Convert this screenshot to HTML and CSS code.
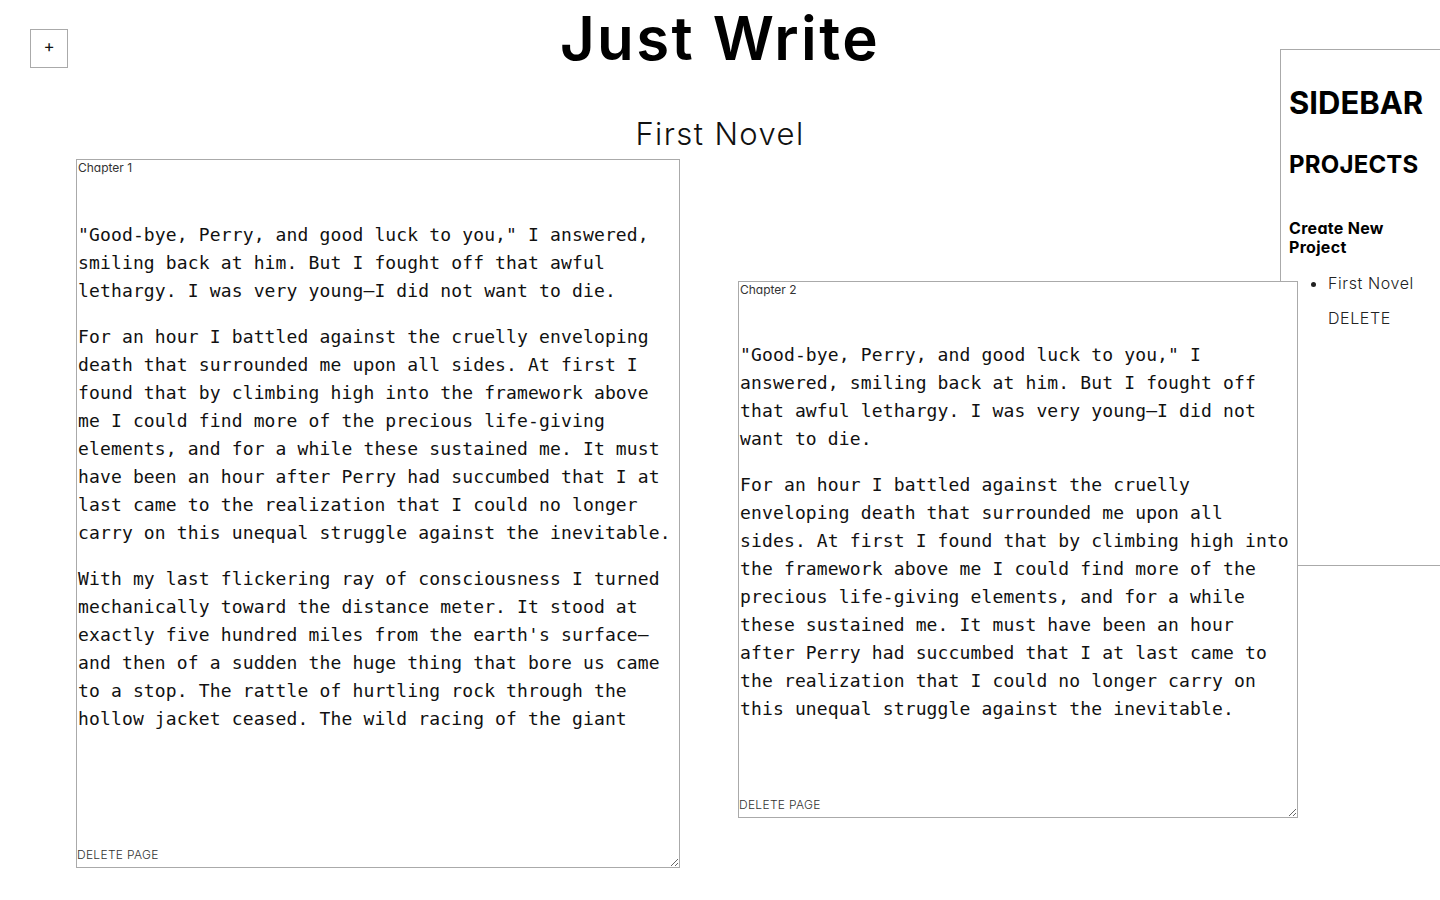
FILE: index.html
```html
<!DOCTYPE html>
<html lang="en">
<head>
<meta charset="utf-8">
<title>Just Write</title>
<link rel="stylesheet" href="styles.css">
</head>
<body>
<div class="app">
  <header class="topbar">
    <button class="add-btn" type="button">+</button>
    <h1 class="app-title">Just Write</h1>
  </header>
  <h2 class="project-title">First Novel</h2>
  <main class="pages">
    <section class="page page--one">
      <div class="page-title">Chapter 1</div>
      <div class="page-body">
        <p>"Good-bye, Perry, and good luck to you," I answered, smiling back at him. But I fought off that awful lethargy. I was very young—I did not want to die.</p>
        <p>For an hour I battled against the cruelly enveloping death that surrounded me upon all sides. At first I found that by climbing high into the framework above me I could find more of the precious life-giving elements, and for a while these sustained me. It must have been an hour after Perry had succumbed that I at last came to the realization that I could no longer carry on this unequal struggle against the inevitable.</p>
        <p>With my last flickering ray of consciousness I turned mechanically toward the distance meter. It stood at exactly five hundred miles from the earth's surface—and then of a sudden the huge thing that bore us came to a stop. The rattle of hurtling rock through the hollow jacket ceased. The wild racing of the giant</p>
      </div>
      <button class="page-delete" type="button">DELETE PAGE</button>
    </section>
    <section class="page page--two">
      <div class="page-title">Chapter 2</div>
      <div class="page-body">
        <p>"Good-bye, Perry, and good luck to you," I answered, smiling back at him. But I fought off that awful lethargy. I was very young—I did not want to die.</p>
        <p>For an hour I battled against the cruelly enveloping death that surrounded me upon all sides. At first I found that by climbing high into the framework above me I could find more of the precious life-giving elements, and for a while these sustained me. It must have been an hour after Perry had succumbed that I at last came to the realization that I could no longer carry on this unequal struggle against the inevitable.</p>
      </div>
      <button class="page-delete" type="button">DELETE PAGE</button>
    </section>
  </main>
  <aside class="sidebar">
    <h1 class="sidebar-title">SIDEBAR</h1>
    <h2 class="sidebar-sub">PROJECTS</h2>
    <h4 class="sidebar-create">Create New Project</h4>
    <ul class="project-list">
      <li class="project-item">First Novel</li>
    </ul>
    <div class="project-delete">DELETE</div>
  </aside>
</div>
</body>
</html>
```

FILE: styles.css
```css
html, body {
  margin: 0;
  padding: 0;
  background: #ffffff;
}

body {
  font-family: Inter, "Noto Sans", sans-serif;
  font-feature-settings: "cv11" 1;
  color: #111;
  overflow: hidden;
}

.app {
  position: relative;
  min-height: 900px;
}

.topbar {
  display: grid;
  grid-template-columns: 1fr auto 1fr;
  align-items: start;
}

.add-btn {
  justify-self: start;
  margin: 29px 0 0 30px;
  width: 38px;
  height: 39px;
  box-sizing: border-box;
  border: 1px solid #aaa;
  background: #fff;
  font-family: Inter, sans-serif;
  font-size: 17px;
  line-height: 1;
  color: #111;
  padding: 0 0 4px;
}

.app-title {
  grid-column: 2;
  margin: 0;
  font-size: 60px;
  line-height: 76px;
  font-weight: 600;
  letter-spacing: 2.4px;
  color: #000;
}

.project-title {
  margin: 38px 0 5px;
  text-align: center;
  font-size: 31px;
  line-height: 40px;
  font-weight: 300;
  letter-spacing: 1.4px;
  color: #111;
}

.pages {
  display: flex;
  align-items: flex-start;
  gap: 58px;
  padding-left: 76px;
}

.page {
  position: relative;
  z-index: 1;
  display: flex;
  flex-direction: column;
  box-sizing: border-box;
  border: 1px solid #aaa;
  background: #fff;
  resize: both;
  overflow: hidden;
}

.page--one {
  width: 604px;
  height: 709px;
}

.page--two {
  width: 560px;
  height: 537px;
  margin-top: 122px;
}

.page-title {
  font-size: 12px;
  line-height: 15px;
  color: #333;
  padding-left: 1px;
}

.page-body {
  flex: 1;
  margin-top: 44px;
  font-family: "DejaVu Sans Mono", "Liberation Mono", monospace;
  font-size: 18px;
  line-height: 28px;
  letter-spacing: 0.14px;
  color: #111;
  padding-left: 1px;
}

.page--one .page-body {
  margin-top: 46px;
}

.page-body p {
  margin: 0 0 18px;
}

.page-delete {
  margin-top: auto;
  margin-bottom: 5px;
  align-self: flex-start;
  border: 0;
  background: transparent;
  padding: 0;
  font-family: Inter, sans-serif;
  font-feature-settings: "cv11" 1;
  font-size: 12px;
  line-height: 15px;
  font-weight: 300;
  color: #333;
  letter-spacing: 0.3px;
}

.sidebar {
  position: absolute;
  top: 49px;
  right: 0;
  width: 160px;
  height: 517px;
  box-sizing: border-box;
  border: 1px solid #aaa;
  border-right: 0;
  background: #fff;
  padding: 34px 0 0 8px;
  z-index: 0;
}

.sidebar-title {
  margin: 0;
  font-size: 31px;
  line-height: 38px;
  font-weight: 700;
  letter-spacing: 0;
  color: #000;
}

.sidebar-sub {
  margin: 28px 0 0;
  font-size: 24px;
  line-height: 29px;
  font-weight: 700;
  letter-spacing: 0.2px;
  color: #000;
}

.sidebar-create {
  margin: 40px 0 0;
  font-size: 16px;
  line-height: 19px;
  font-weight: 700;
  letter-spacing: 0.3px;
  color: #000;
}

.project-list {
  margin: 16px 0 0;
  padding-left: 39px;
}

.project-item {
  font-size: 16px;
  line-height: 20px;
  font-weight: 300;
  letter-spacing: 0.6px;
  color: #222;
}

.project-delete {
  margin: 15px 0 0 39px;
  font-size: 16px;
  line-height: 20px;
  font-weight: 300;
  letter-spacing: 0.6px;
  color: #222;
}
```
